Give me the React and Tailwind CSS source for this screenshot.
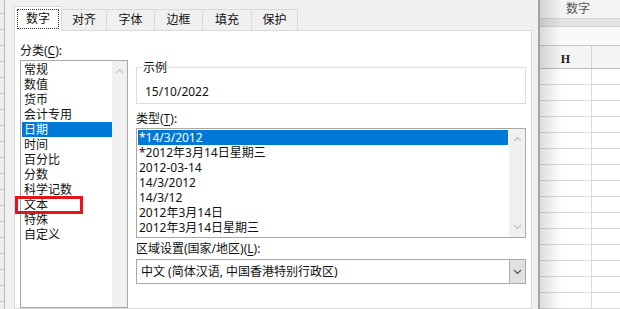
import React from 'react';

const FONT = { fontFamily: '"Noto Sans", "Noto Sans CJK SC", sans-serif' };

const tabs = [
  { label: '数字', w: 'w-[48px]' },
  { label: '对齐', w: 'w-[45px]' },
  { label: '字体', w: 'w-[48px]' },
  { label: '边框', w: 'w-[48px]' },
  { label: '填充', w: 'w-[49px]' },
  { label: '保护', w: 'w-[46px]' },
];

const categories = ['常规', '数值', '货币', '会计专用', '日期', '时间', '百分比', '分数', '科学记数', '文本', '特殊', '自定义'];

const types = [
  '*14/3/2012',
  '*2012年3月14日星期三',
  '2012-03-14',
  '14/3/2012',
  '14/3/12',
  '2012年3月14日',
  '2012年3月14日星期三',
];

const Up = () => (
  <svg width="9" height="6" viewBox="0 0 9 6" className="mx-auto">
    <path d="M1 5 L4.5 1.5 L8 5" fill="none" stroke="#c2c2c2" strokeWidth="1.2" />
  </svg>
);

const Down = ({ color = '#c2c2c2' }) => (
  <svg width="9" height="6" viewBox="0 0 9 6" className="mx-auto">
    <path d="M1 1 L4.5 4.5 L8 1" fill="none" stroke={color} strokeWidth="1.2" />
  </svg>
);

const Tab = ({ label, w, active }) =>
  active ? (
    <div className={`${w} h-[25px] -mb-px bg-white border border-b-0 border-[#d9d9d9] relative z-10 flex items-center justify-center p-[2px]`}>
      <div className="w-full h-full border border-dotted border-[#333] flex items-center justify-center text-[12px] text-[#111]">
        {label}
      </div>
    </div>
  ) : (
    <div className={`${w} h-[21px] bg-[#f0f0f0] border border-b-0 border-l-0 border-[#d9d9d9] flex items-center justify-center text-[12px] text-[#111]`}>
      {label}
    </div>
  );

const U = ({ children }) => <span className="underline underline-offset-2">{children}</span>;

const App = () => {
  return (
    <div className="w-[620px] h-[309px] overflow-hidden flex bg-white" style={FONT}>
      {/* excel strip on the left */}
      <div className="w-[5px] h-full bg-[#ececec] border-r border-[#b9b9b9] flex flex-col pt-[13px]">
        {Array.from({ length: 19 }).map((_, i) => (
          <div key={i} className="h-[16px] shrink-0 border-t border-[#c6c6c6]" />
        ))}
      </div>

      {/* dialog */}
      <div className="w-[533px] h-full bg-[#f0f0f0] flex flex-col">
        <div className="h-[30px] flex items-end pl-[9px]">
          {tabs.map((t, i) => (
            <Tab key={t.label} label={t.label} w={t.w} active={i === 0} />
          ))}
        </div>
        <div className="ml-[9px] w-[518px] flex-1 bg-white border border-[#d9d9d9] flex gap-[8px] pl-[5px] pt-[12px] text-[12px] leading-[15px] text-[#111]">
          {/* category */}
          <div className="relative w-[108px] flex flex-col">
            <div>分类(<U>C</U>):</div>
            <div className="mt-[2px] flex-1 border border-[#a9a9a9] flex">
              <div className="flex-1 pt-[1px] pl-[1px]">
                {categories.map((c, i) => (
                  <div key={c} className={`h-[15px] pl-[2px] ${i === 4 ? 'bg-[#0078d7] text-white' : ''}`}>
                    {c}
                  </div>
                ))}
              </div>
              <div className="w-[15px] bg-[#f0f0f0] pt-[7px]">
                <Up />
              </div>
            </div>
            {/* red highlight around 文本 */}
            <div className="absolute left-[-5px] top-[153px] w-[68px] h-[18px] border-[3px] border-[#e5131c]" />
          </div>

          {/* right side */}
          <div className="w-[390px] flex flex-col">
            <div className="relative mt-[24px] h-[37px] border border-[#dcdcdc] pl-[8px] pt-[16px]">
              <span className="absolute left-[5px] top-[-8px] bg-white px-[1px]">示例</span>
              <div>15/10/2022</div>
            </div>
            <div className="mt-[7px]">类型(<U>T</U>):</div>
            <div className="mt-[2px] h-[110px] border border-[#a9a9a9] flex">
              <div className="flex-1 p-[1px]">
                {types.map((t, i) => (
                  <div key={t} className={`h-[15px] pl-[1px] ${i === 0 ? 'bg-[#0078d7] text-white' : ''}`}>
                    {t}
                  </div>
                ))}
              </div>
              <div className="w-[16px] bg-[#f0f0f0] flex flex-col justify-between py-[7px]">
                <Up />
                <Down />
              </div>
            </div>
            <div className="mt-[3px]">区域设置(国家/地区)(<U>L</U>):</div>
            <div className="mt-[3px] h-[25px] border border-[#a9a9a9] flex">
              <div className="flex-1 pl-[4px] flex items-center">中文 (简体汉语, 中国香港特别行政区)</div>
              <div className="w-[16px] bg-[#e1e1e1] border-l border-[#adadad] flex items-center">
                <Down color="#555" />
              </div>
            </div>
          </div>
        </div>
      </div>

      {/* excel on the right */}
      <div className="w-[2px] h-full bg-[#a3a3a3]" />
      <div className="flex-1 h-full relative flex flex-col">
        <div className="h-[23px] bg-[#f3f3f3] flex items-center pl-[26px] text-[12px] text-[#555]">数字</div>
        <div className="h-[10px] bg-[#e4e4e4] border-y border-[#d2d2d2]" />
        <div className="h-[24px] bg-[#fafafa] border-b border-[#c8c8c8]" />
        <div className="h-[24px] bg-[#f4f4f4] border-b border-[#bdbdbd] flex">
          <div className="w-[52px] border-r border-[#d4d4d4] flex items-center justify-center pt-[4px] text-[12px] font-bold text-[#222]" style={{ fontFamily: '"Liberation Serif", serif' }}>
            H
          </div>
        </div>
        <div className="flex-1 flex flex-col">
          {Array.from({ length: 15 }).map((_, i) => (
            <div key={i} className="h-[16px] shrink-0 border-b border-[#dadada] flex">
              <div className="w-[52px] border-r border-[#dadada]" />
            </div>
          ))}
        </div>
        <div className="absolute left-0 top-0 bottom-0 w-[22px] bg-gradient-to-r from-[#00000022] to-transparent pointer-events-none" />
      </div>
    </div>
  );
};

export default App;
